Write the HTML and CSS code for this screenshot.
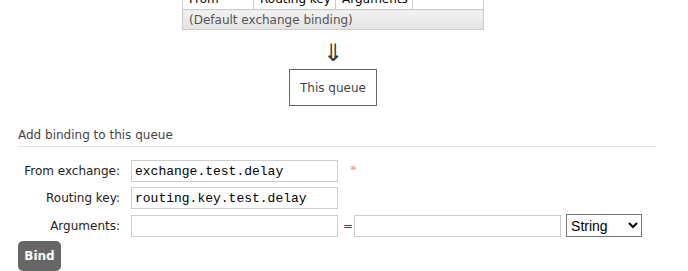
FILE: index.html
```html
<!DOCTYPE html>
<html>
<head>
  <meta charset="utf-8">
  <title>Queue bindings</title>
  <link rel="stylesheet" href="styles.css">
</head>
<body>

<div class="page">

  <div class="bindings">
    <table class="list">
      <tr>
        <th class="c-from">From</th>
        <th class="c-key">Routing key</th>
        <th class="c-args">Arguments</th>
        <th class="c-act"></th>
      </tr>
      <tr>
        <td colspan="4" class="default-binding">(Default exchange binding)</td>
      </tr>
    </table>
    <div class="arrow">&#8659;</div>
    <div class="this-queue">This queue</div>
  </div>

  <h3 class="section-title">Add binding to this queue</h3>

  <form class="bind-form">
    <label>From exchange:</label>
    <div class="field">
      <input type="text" class="wide" value="exchange.test.delay">
      <span class="mand">*</span>
    </div>

    <label>Routing key:</label>
    <div class="field">
      <input type="text" class="wide" value="routing.key.test.delay">
    </div>

    <label>Arguments:</label>
    <div class="field">
      <input type="text" class="wide">
      <span class="eq">=</span>
      <input type="text" class="wide">
      <select class="arg-type">
        <option>String</option>
        <option>Number</option>
        <option>Boolean</option>
        <option>List</option>
      </select>
    </div>
  </form>

  <button type="button" class="bind-btn">Bind</button>

</div>

</body>
</html>
```

FILE: styles.css
```css
* {
  box-sizing: border-box;
}

body {
  margin: 0;
  font-family: "DejaVu Sans", Verdana, sans-serif;
  font-size: 12px;
  color: #484848;
  background: #fff;
  overflow: hidden;
}

.page {
  margin-top: -13px;
  padding-left: 18px;
  width: 656px;
}

/* bindings diagram */
.bindings {
  display: flex;
  flex-direction: column;
  align-items: center;
  margin-left: -18px;
  width: 666px;
}

table.list {
  border-collapse: collapse;
  table-layout: fixed;
  width: 302px;
}

table.list th {
  font-weight: normal;
  text-align: left;
  white-space: nowrap;
  overflow: hidden;
  color: #000;
  background: #fff;
  border: 1px solid #ccc;
  height: 22px;
  padding: 0 6px;
}

.c-from { width: 71px; }
.c-key { width: 82px; }
.c-args { width: 77px; }

.default-binding {
  border: 1px solid #ccc;
  background: linear-gradient(#f2f2f2, #e2e2e2);
  height: 20px;
  padding: 0 6px;
  color: #555;
}

.arrow {
  margin-top: 10px;
  font-size: 24px;
  line-height: 26px;
  color: #333;
}

.this-queue {
  margin-top: 3px;
  border: 1px solid #666;
  width: 88px;
  height: 37px;
  display: flex;
  align-items: center;
  justify-content: center;
  color: #444;
}

/* add binding */
.section-title {
  margin: 22px 0 0;
  font-size: 12px;
  font-weight: normal;
  color: #444;
  padding-bottom: 4px;
  border-bottom: 1px solid #e0e0e0;
}

.bind-form {
  display: grid;
  grid-template-columns: 102px auto;
  column-gap: 11px;
  row-gap: 5px;
  align-items: center;
  margin-top: 13px;
}

.bind-form label {
  text-align: right;
  color: #222;
  font-size: 12px;
}

.field {
  display: flex;
  align-items: center;
}

input.wide {
  width: 207px;
  height: 22px;
  border: 1px solid #ccc;
  padding: 0 3px;
  font-family: "Liberation Mono", "Courier New", monospace;
  font-size: 13px;
  color: #000;
}

.mand {
  color: #f09090;
  font-size: 13px;
  margin: 2px 0 0 12px;
  align-self: flex-start;
}

.eq {
  margin: 0 1px 0 5px;
  color: #444;
}

.arg-type {
  margin-left: 5px;
  width: 76px;
  height: 23px;
  font-family: "Liberation Sans", Arial, sans-serif;
  font-size: 14px;
  color: #000;
  border: 1px solid #767676;
  background: #fff;
}

.bind-btn {
  margin-top: 4px;
  width: 43px;
  height: 30px;
  border: none;
  border-radius: 5px;
  background: #666;
  color: #fff;
  font-family: "DejaVu Sans", Verdana, sans-serif;
  font-size: 12px;
  font-weight: bold;
  padding: 0;
}
```
